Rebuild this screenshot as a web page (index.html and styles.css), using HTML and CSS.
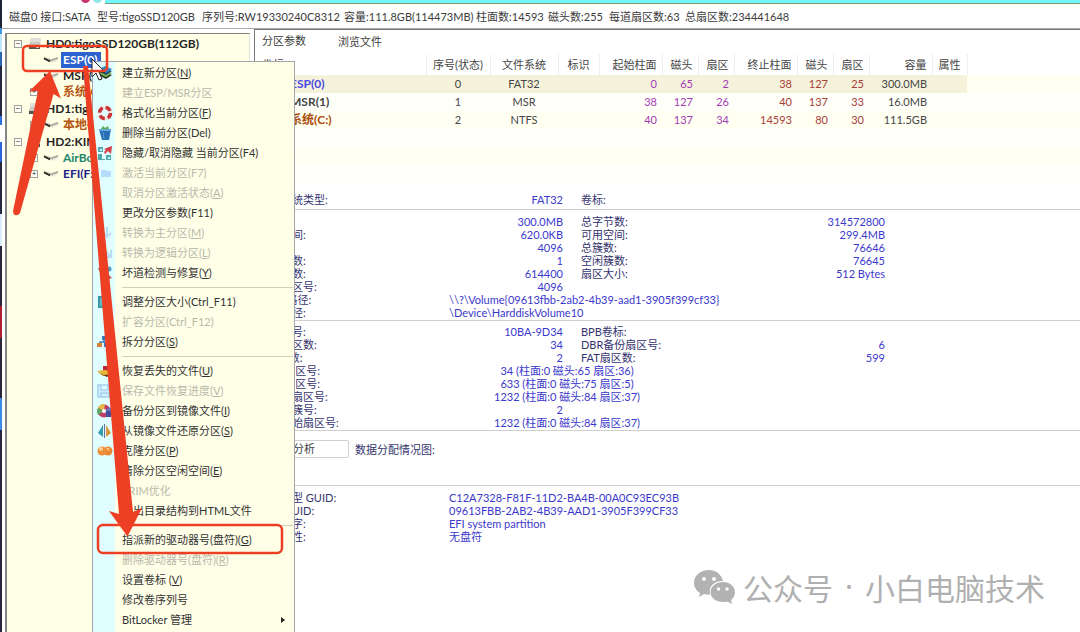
FILE: index.html
```html
<!DOCTYPE html>
<html lang="zh-CN">
<head>
<meta charset="utf-8">
<title>磁盘分区管理</title>
<link rel="stylesheet" href="styles.css">
</head>
<body>
<svg class="defs" width="0" height="0" aria-hidden="true">
  <defs>
    <symbol id="hdd" viewBox="0 0 14 14"><path d="M3 1h10l-1 8H1z" fill="#c9c9c5"/><path d="M3 1h10v4H2z" fill="#dededa"/><path d="M1 9h11v3H1z" fill="#55554f"/><path d="M8 10h3v1H8z" fill="#d8d8d0"/></symbol>
    <symbol id="part" viewBox="0 0 16 8"><path d="M1 2l7 2.500 7-2.500" fill="none" stroke="#a9a99e" stroke-width="2"/><path d="M1 2.500l6 3" stroke="#22221e" stroke-width="1.500"/><path d="M8 6l6-2" stroke="#e0e0d8" stroke-width="1.500"/></symbol>
  </defs>
</svg>
<div class="desktop">
<div class="window">
  <div class="ribbon">
    <span class="dot pink"></span><span class="dot aqua"></span><span class="ribbon-bar"></span>
  </div>
  <header class="info">
    <span class="i1">磁盘0 接口:SATA</span><span class="i2">型号:tigoSSD120GB</span><span class="i3">序列号:RW19330240C8312</span><span class="i4">容量:111.8GB(114473MB)</span><span class="i5">柱面数:14593</span><span class="i6">磁头数:255</span><span class="i7">每道扇区数:63</span><span>总扇区数:234441648</span>
  </header>
  <div class="body">
    <nav class="tree">
      <div class="group">
        <div class="node disk"><span class="box">−</span><svg class="hdd"><use href="#hdd"/></svg><b>HD0:tigoSSD120GB(112GB)</b></div>
        <div class="node leaf"><svg class="part"><use href="#part"/></svg><b class="selected">ESP(0)</b></div>
        <div class="node leaf"><svg class="part"><use href="#part"/></svg><b>MSR(1)</b></div>
        <div class="node leaf"><span class="box">+</span><svg class="part"><use href="#part"/></svg><b class="brown">系统(C:)</b></div>
      </div>
      <div class="group">
        <div class="node disk"><span class="box">−</span><svg class="hdd"><use href="#hdd"/></svg><b>HD1:tigo</b></div>
        <div class="node leaf"><span class="box">+</span><svg class="part"><use href="#part"/></svg><b class="brown">本地磁盘</b></div>
      </div>
      <div class="group">
        <div class="node disk"><span class="box">−</span><svg class="hdd"><use href="#hdd"/></svg><b>HD2:KING</b></div>
        <div class="node leaf"><span class="box">+</span><svg class="part"><use href="#part"/></svg><b class="green">AirBoot</b></div>
        <div class="node leaf"><span class="box">+</span><svg class="part"><use href="#part"/></svg><b class="navy">EFI(F:)</b></div>
      </div>
    </nav>
    <main class="pane">
      <div class="tabs"><button class="tab active">分区参数</button><button class="tab">浏览文件</button></div>
      <table class="parts">
        <colgroup><col class="c-name"><col class="c-no"><col class="c-fs"><col class="c-id"><col class="c-wide"><col class="c-num"><col class="c-num"><col class="c-wide"><col class="c-num"><col class="c-num"><col class="c-wide"><col class="c-attr"><col></colgroup>
        <thead><tr><th class="l">卷标</th><th class="m">序号(状态)</th><th class="m">文件系统</th><th class="m">标识</th><th>起始柱面</th><th>磁头</th><th>扇区</th><th>终止柱面</th><th>磁头</th><th>扇区</th><th>容量</th><th class="m">属性</th><th class="rest"></th></tr></thead>
        <tbody>
          <tr class="current"><td class="name blue">ESP(0)</td><td class="m">0</td><td class="m">FAT32</td><td></td><td class="s">0</td><td class="s">65</td><td class="s">2</td><td class="e">38</td><td class="e">127</td><td class="e">25</td><td>300.0MB</td><td></td><td class="rest"></td></tr>
          <tr><td class="name">MSR(1)</td><td class="m">1</td><td class="m">MSR</td><td></td><td class="s">38</td><td class="s">127</td><td class="s">26</td><td class="e">40</td><td class="e">137</td><td class="e">33</td><td>16.0MB</td><td></td><td class="rest"></td></tr>
          <tr><td class="name brown">系统(C:)</td><td class="m">2</td><td class="m">NTFS</td><td></td><td class="s">40</td><td class="s">137</td><td class="s">34</td><td class="e">14593</td><td class="e">80</td><td class="e">30</td><td>111.5GB</td><td></td><td class="rest"></td></tr>
          <tr><td colspan="13"></td></tr><tr><td colspan="13"></td></tr><tr><td colspan="13"></td></tr>
        </tbody>
      </table>
      <section class="details">
        <div class="block fs"><div class="row"><span>文件系统类型:</span><span class="v">FAT32</span><span>卷标:</span></div></div>
        <div class="block size">
          <div class="row"><span>总容量:</span><span class="v">300.0MB</span><span>总字节数:</span><span class="v2">314572800</span></div>
          <div class="row"><span>已用空间:</span><span class="v">620.0KB</span><span>可用空间:</span><span class="v2">299.4MB</span></div>
          <div class="row"><span>簇大小:</span><span class="v">4096</span><span>总簇数:</span><span class="v2">76646</span></div>
          <div class="row"><span>已用簇数:</span><span class="v">1</span><span>空闲簇数:</span><span class="v2">76645</span></div>
          <div class="row"><span>总扇区数:</span><span class="v">614400</span><span>扇区大小:</span><span class="v2">512 Bytes</span></div>
          <div class="row"><span>起始扇区号:</span><span class="v">4096</span></div>
          <div class="row"><span>GUID路径:</span><span class="text">\\?\Volume{09613fbb-2ab2-4b39-aad1-3905f399cf33}</span></div>
          <div class="row"><span>设备路径:</span><span class="text">\Device\HarddiskVolume10</span></div>
        </div>
        <div class="block">
          <div class="row"><span>卷序列号:</span><span class="v">10BA-9D34</span><span>BPB卷标:</span></div>
          <div class="row"><span>保留扇区数:</span><span class="v">34</span><span>DBR备份扇区号:</span><span class="v2">6</span></div>
          <div class="row"><span>FAT个数:</span><span class="v">2</span><span>FAT扇区数:</span><span class="v2">599</span></div>
          <div class="row"><span>FAT1扇区号:</span><span class="chs">34 (柱面:0 磁头:65 扇区:36)</span></div>
          <div class="row"><span>FAT2扇区号:</span><span class="chs">633 (柱面:0 磁头:75 扇区:5)</span></div>
          <div class="row"><span>根目录扇区号:</span><span class="chs">1232 (柱面:0 磁头:84 扇区:37)</span></div>
          <div class="row"><span>根目录簇号:</span><span class="v">2</span></div>
          <div class="row"><span>数据起始扇区号:</span><span class="chs">1232 (柱面:0 磁头:84 扇区:37)</span></div>
        </div>
        <div class="block analyse"><button>分析</button><span>数据分配情况图:</span></div>
        <div class="block last">
          <div class="row"><span>分区类型 GUID:</span><span class="text">C12A7328-F81F-11D2-BA4B-00A0C93EC93B</span></div>
          <div class="row"><span>分区 GUID:</span><span class="text">09613FBB-2AB2-4B39-AAD1-3905F399CF33</span></div>
          <div class="row"><span>分区名字:</span><span class="text">EFI system partition</span></div>
          <div class="row"><span>分区属性:</span><span class="text">无盘符</span></div>
        </div>
      </section>
    </main>
  </div>

  <div class="menu" role="menu">
    <button role="menuitem"><svg viewBox="0 0 16 16"><path d="M1 10l6-3 8 3-6 4z" fill="#2e3b2a"/><path d="M1 8l6-3 8 3-6 4z" fill="#7fb64a"/><path d="M1 6l6-3 8 3-6 4z" fill="#174a76"/><path d="M2 4l6-3 7 3-6 4z" fill="#3687c4"/></svg>建立新分区(<u>N</u>)</button>
    <button role="menuitem" disabled><i></i>建立ESP/MSR分区</button>
    <button role="menuitem"><svg viewBox="0 0 16 16"><circle cx="8" cy="8" r="5.500" fill="none" stroke="#f3e4e4" stroke-width="3.500"/><circle cx="8" cy="8" r="5.500" fill="none" stroke="#c83338" stroke-width="3.500" stroke-dasharray="5.600 3.040"/></svg>格式化当前分区(<u>F</u>)</button>
    <button role="menuitem"><svg viewBox="0 0 16 16"><path d="M4 4l2-3 2 2 3-2 1 3z" fill="#58ad4f"/><path d="M2 4h12l-2 11H5z" fill="#286fb5"/><path d="M2 4h12l-1 2H3z" fill="#66a9dc"/><path d="M6 7l1 7" stroke="#5b9cd5"/></svg>删除当前分区(Del)</button>
    <button role="menuitem"><svg viewBox="0 0 16 16"><path d="M1 2h5v5H1zM1 9h4v5h3v1H1zM9 10h5v5H9z" fill="#53a8ad"/><path d="M3 4h2v2H3zM11 12h2v2h-2z" fill="#c9f0ee"/><path d="M7 4l8-3-1 8-3-3-3 3-1-2 2-2z" fill="#d43d45"/></svg>隐藏/取消隐藏 当前分区(F4)</button>
    <button role="menuitem" disabled><svg viewBox="0 0 16 16"><path d="M4 5h5l1 1h4v6H4z" fill="#b5dcfa"/></svg>激活当前分区(F7)</button>
    <button role="menuitem" disabled><i></i>取消分区激活状态(<u>A</u>)</button>
    <button role="menuitem"><i></i>更改分区参数(F11)</button>
    <button role="menuitem" disabled><svg viewBox="0 0 16 16"><path d="M10 2v9M7 8l3 4 4-4" fill="none" stroke="#b5dcf2" stroke-width="2"/></svg>转换为主分区(<u>M</u>)</button>
    <button role="menuitem" disabled><svg viewBox="0 0 16 16"><path d="M8 5v7h6V5M9 6l4 6" fill="none" stroke="#b9dcf5" stroke-width="2"/></svg>转换为逻辑分区(<u>L</u>)</button>
    <button role="menuitem"><svg viewBox="0 0 16 16"><path d="M2 4l11 9M13 3L5 13" stroke="#3b81ac" stroke-width="2"/><circle cx="12" cy="4" r="2.500" fill="#4b9cc7"/><path d="M1 3l4-1 1 4-3 1zM12 10l3 3-3 1z" fill="#b95b54"/></svg>坏道检测与修复(<u>Y</u>)</button>
    <hr>
    <button role="menuitem"><svg viewBox="0 0 16 16"><path d="M1 2h6v12H1z" fill="#3d9aa5"/><path d="M3 4h3v8H3z" fill="#62b8c6"/></svg>调整分区大小(Ctrl_F11)</button>
    <button role="menuitem" disabled><i></i>扩容分区(Ctrl_F12)</button>
    <button role="menuitem"><svg viewBox="0 0 16 16"><path d="M7 5v4M3 11V8h9v3" fill="none" stroke="#427db9" stroke-width="1.500"/><path d="M5 2h5v4H5z" fill="#317dbf"/><path d="M0 9h5v4H0z" fill="#d68238"/><path d="M7 9h4v4H7z" fill="#317dbf"/></svg>拆分分区(<u>S</u>)</button>
    <hr>
    <button role="menuitem"><svg viewBox="0 0 16 16"><path d="M6 3h7v6H6z" fill="#c02930"/><path d="M0 8l8-1 7 1-2 4-7 1z" fill="#e6b638"/><path d="M1 10l6 2 7-1-4 3z" fill="#70401c"/></svg>恢复丢失的文件(<u>U</u>)</button>
    <button role="menuitem" disabled><svg viewBox="0 0 16 16"><path d="M1 2h12l2 2v10H1zM4 2v5h7V2M4 14v-4h8v4" fill="#d3efff" stroke="#a5d0f1" stroke-width="1.500"/></svg>保存文件恢复进度(<u>V</u>)</button>
    <button role="menuitem"><svg viewBox="0 0 16 16"><circle cx="7" cy="8" r="6.500" fill="#be3f65"/><path d="M7 8L1 5a6.500 6.500 0 017-4z" fill="#e7b847"/><path d="M7 8L1 12a7 7 0 010-7z" fill="#62a864"/><path d="M7 8l6-4a7 7 0 01-2 10z" fill="#6874bd"/><circle cx="7" cy="8" r="2" fill="#fff"/><path d="M9 8h5v6H9z" fill="#474d9c"/></svg>备份分区到镜像文件(<u>I</u>)</button>
    <button role="menuitem"><svg viewBox="0 0 16 16"><path d="M6 2v12L1 10z" fill="#389bad"/><path d="M9 2l5 8-5 4z" fill="#db963c"/><path d="M7.500 1v14" stroke="#6870a0"/></svg>从镜像文件还原分区(<u>S</u>)</button>
    <button role="menuitem"><svg viewBox="0 0 16 16"><circle cx="11" cy="8" r="4.500" fill="#e98a35"/><circle cx="5" cy="8" r="4.500" fill="#ef8f3c"/><circle cx="4" cy="6" r="2" fill="#ffcf92"/><circle cx="11" cy="6" r="1.500" fill="#ffc079"/></svg>克隆分区(<u>P</u>)</button>
    <button role="menuitem"><i></i>清除分区空闲空间(<u>E</u>)</button>
    <button role="menuitem" disabled><i></i>TRIM优化</button>
    <button role="menuitem"><i></i>导出目录结构到HTML文件</button>
    <hr>
    <button role="menuitem"><i></i>指派新的驱动器号(盘符)(<u>G</u>)</button>
    <button role="menuitem" disabled><i></i>删除驱动器号(盘符)(<u>R</u>)</button>
    <button role="menuitem"><i></i>设置卷标 (<u>V</u>)</button>
    <button role="menuitem"><i></i>修改卷序列号</button>
    <button role="menuitem"><i></i>BitLocker 管理<span class="more"></span></button>
  </div>

  <svg class="marks" width="300" height="632" viewBox="0 0 300 632" aria-hidden="true">
    <path d="M92 59v18l4-4 3 7 3-1-3-7h6z" fill="#fff" stroke="#222" stroke-width="1"/>
    <g fill="none" stroke="#ed3f24" stroke-width="2.500"><rect x="23" y="46" width="84" height="25" rx="4"/><rect x="98" y="525" width="184" height="28" rx="5"/></g>
    <g fill="#ed3f24"><path d="M50 71l11 27.500-7.500-4.500L20 213q-2 3-5 2-2-1-2-4L38 91l-9 .5z"/><path d="M83 66h5l45 446 9-4-14.500 28.500L109 511l10 3z"/></g>
  </svg>
</div>
<div class="watermark">
  <svg width="42" height="34" viewBox="0 0 42 34" aria-hidden="true"><path d="M15 0C6.500 0 0 5.500 0 13c0 4 2 7.500 6 10l-1 4 5-3c2 .6 4 .8 6 .6C14 16 21 10.500 29 11 27.500 4.500 22 0 15 0z" fill="#b2b2b2"/><path d="M29 12c-7 0-12.500 4.500-12.500 10.200S22 32 29 32c1.500 0 3-.2 4.500-.6L38 34l-1-4c2.500-1.800 4-4.500 4-7.800C41 16.500 36 12 29 12z" fill="#b2b2b2"/><g fill="#fff"><circle cx="10" cy="9" r="2"/><circle cx="20" cy="9" r="2"/><circle cx="24.500" cy="19" r="1.700"/><circle cx="33" cy="19" r="1.700"/></g></svg>
  <span>公众号</span><span class="mid">·</span><span>小白电脑技术</span>
</div>
</div>
</body>
</html>
```
FILE: styles.css
```css
* { box-sizing: border-box; }
body {
  margin: 0;
  background: #fff;
  color: #3c3c3c;
  font: 11px/16px Lato, "Noto Sans CJK SC", sans-serif;
}
button { font: inherit; color: inherit; border: 0; background: none; padding: 0; margin: 0; text-align: left; }
.defs { position: absolute; }

.desktop {
  position: relative;
  min-height: 100vh;
  display: flex;
  overflow: hidden;
  padding-left: 2px;
  background: linear-gradient(#1d2438 0 28px, #3f9be0 28px 34px, #bfe6fa 34px 52px, #2b68ad 52px 66px, #22273c 66px 116px, #2f6fe6 116px 125px, #fff 125px 142px, #2a62d8 142px 162px, #25273a 162px 214px, #d8ecfa 214px 246px, #2a2838 246px 306px, #b21f30 306px 338px, #2a2838 338px 398px, #3b8be8 398px 430px, #25243a 430px);
}
.window { flex: 1; min-width: 0; display: flex; flex-direction: column; background: #fff; }

.ribbon { display: flex; height: 4px; padding-left: 79px; gap: 3px; overflow: hidden; }
.dot { width: 9px; height: 9px; margin-top: -6px; border-radius: 50%; }
.pink { background: #c8326e; }
.aqua { background: #8ee8e4; }
.ribbon-bar { flex: 1; background: #74f5fc; border-bottom: 1px solid #7a9a70; }

.info { display: flex; height: 25px; align-items: center; padding-left: 7px; white-space: nowrap; }
.i1 { width: 88px; }
.i2 { width: 105px; }
.i3 { width: 142px; }
.i4 { width: 132px; }
.i5 { width: 72px; }
.i6 { width: 61px; }
.i7 { width: 76px; }

.body { flex: 1; display: flex; gap: 4px; border-top: 1px solid #aaa; margin-top: -1px; padding-left: 3px; }
.tree {
  width: 245px;
  margin-top: 4px;
  padding: 2px 0 0 6px;
  border: solid #858585;
  border-width: 1px 1px 0 2px;
  border-right-color: #e2e2d8;
  background: #ffffe6;
  font-size: 12px;
  color: #252525;
  display: flex;
  flex-direction: column;
  gap: 1px;
  white-space: nowrap;
}
.node { display: flex; align-items: center; height: 16px; }
.disk { padding-left: 1px; }
.disk .hdd { margin: 0 4px 0 6px; }
.leaf { padding-left: 30px; }
.leaf:has(.box) { padding-left: 17px; }
.box {
  width: 8px; height: 8px; border: 1px solid #a0a09c; background: #fffff8;
  font: 8px/6px "Liberation Sans", sans-serif; text-align: center; color: #333;
}
.hdd { width: 14px; height: 14px; }
.part { width: 16px; height: 8px; margin-right: 2px; }
.leaf .box + .part { margin-left: 5px; }
.leaf b { padding: 0 4px 0 2px; line-height: 16px; }
.selected { background: #2c62cf; color: #fff; }
.brown { color: #b5560f; }
.green { color: #21876c; }
.navy { color: #1c1c86; }

.pane { flex: 1; min-width: 0; border: solid #777; border-width: 1px 0 0 1px; }
.tabs { display: flex; height: 24px; padding: 3px 0 0 7px; }
.tab { width: 76px; height: 18px; }
.tab.active { height: 16px; }

.parts { width: 100%; border-collapse: collapse; table-layout: fixed; color: #454545; }
.c-name { width: 171px; }
.c-no { width: 64px; }
.c-fs { width: 68px; }
.c-id { width: 41px; }
.c-wide { width: 63px; }
.c-num { width: 36px; }
.c-attr { width: 35px; }
.parts th { height: 21px; padding: 0 5px 0 0; font-weight: 400; text-align: right; border-right: 1px solid #efefef; }
.parts td { height: 18px; padding: 0 5px 0 0; text-align: right; line-height: 16px; }
.parts .m { text-align: center; padding: 0; }
.parts .l { text-align: left; padding-left: 7px; }
.parts .rest { border: 0; }
.parts .name { text-align: left; padding-left: 35px; font-weight: 700; font-size: 12px; }
.parts .blue { color: #4a48e0; }
.parts .brown { color: #a94b08; }
.parts .s { color: #a33cb4; }
.parts .e { color: #a8403a; }
.parts tbody tr { background: #fffffa; }
.parts tbody tr:nth-child(odd) { background: #fffff2; }
.parts tbody .current td { background: #f5f2dc; }
.parts tbody .current .rest { background: #fffff2; }

.details { color: #34346e; }
.block { padding: 4px 0 1px 4px; border-bottom: 1px solid #cfcfcf; }
.block.fs { padding-top: 10px; padding-bottom: 3px; }
.block.size { padding-top: 5px; }
.row { display: grid; grid-template-columns: 190px 132px 120px 184px; height: 13px; line-height: 13px; white-space: nowrap; }
.v, .v2, .text, .chs { color: #3b38cc; }
.v { text-align: right; padding-right: 18px; }
.v2 { text-align: right; }
.text { grid-column: 2 / 5; }
.chs { grid-column: 2 / 4; text-align: center; padding-right: 16px; }
.analyse { display: flex; align-items: flex-start; gap: 6px; height: 55px; }
.block.analyse { padding-top: 9px; }
.analyse button { width: 90px; height: 18px; border: 1px solid #d0d0d0; border-radius: 2px; text-align: center; color: #3c3c3c; }
.analyse span { line-height: 20px; }
.block.last { border: 0; padding-top: 5px; }

.menu {
  position: absolute;
  left: 92px;
  top: 61px;
  width: 203px;
  padding: 1px 1px 8px 0;
  border: 1px solid #a3a3a8;
  background: linear-gradient(90deg, #e0fdff 22px, #ffffe8 22px);
  color: #333;
  display: flex;
  flex-direction: column;
}
.menu button { display: flex; align-items: center; height: 20px; white-space: nowrap; }
.menu button:disabled { color: #b9b9aa; }
.menu svg { width: 16px; height: 16px; margin: 0 9px 0 4px; }
.menu i { width: 29px; }
.menu hr { width: 171px; height: 1px; margin: 4px 0 4px 29px; border: 0; background: #cfcfbe; }
.menu u { text-underline-offset: 1px; }
.more { margin: 0 8px 0 auto; border: solid transparent; border-width: 3px 0 3px 4px; border-left-color: #222; }
.marks { position: absolute; left: 0; top: 0; pointer-events: none; }

.watermark {
  position: absolute;
  right: 35px;
  bottom: 23px;
  display: flex;
  align-items: center;
  color: #b0b0b0;
  font: 30px/44px "Noto Sans CJK SC", sans-serif;
}
.watermark svg { margin-right: 7px; }
.mid { width: 32px; text-align: center; font-family: "Noto Sans", sans-serif; }
```
